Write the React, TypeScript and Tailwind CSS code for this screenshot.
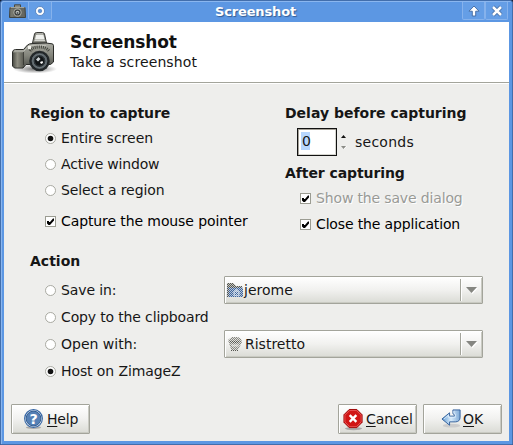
import React from "react";

function Camera() {
  return (
    <svg viewBox="0 0 48 44" className="h-[44px] w-[48px]">
      <defs>
        <linearGradient id="metal" x1="0" y1="0" x2="0" y2="1">
          <stop offset="0" stopColor="#a9aaa2" />
          <stop offset=".5" stopColor="#84857c" />
          <stop offset="1" stopColor="#4a4c47" />
        </linearGradient>
        <linearGradient id="grip" x1="0" y1="0" x2="1" y2="0">
          <stop offset="0" stopColor="#4e4f48" />
          <stop offset=".4" stopColor="#8f8e82" />
          <stop offset="1" stopColor="#55564f" />
        </linearGradient>
        <radialGradient id="shade">
          <stop offset="0" stopColor="#000" stopOpacity=".55" />
          <stop offset="1" stopColor="#000" stopOpacity="0" />
        </radialGradient>
      </defs>
      <ellipse cx="25" cy="38" rx="22" ry="4.500" fill="url(#shade)" />
      <path d="M22.500 12 24.500 3Q25 1.500 26.500 1.500h6q1.500 0 2 1.500L36.500 12z" fill="#8d8e86" stroke="#3a3b37" />
      <path d="M26 4h7.500l1 4.500H25z" fill="#f0f1ee" />
      <path d="M24.500 9.500h10.500M26.500 3h6.500" stroke="#e5e6e2" strokeWidth=".8" />
      <path d="M2.500 21Q3 18.500 5.500 18.500h8l4-4.500Q19 12.500 23 12.500l13-.5 6 .8q1.500.2 1.500 2V31l-3 2.500H16l-3 3.500H4.500L2.500 35z" fill="url(#metal)" stroke="#2b2c29" />
      <path d="M3 21.500h10l1 12-1.500 3H5L3 35z" fill="url(#grip)" />
      <path d="M4 20h10l5-5.500h17" fill="none" stroke="#c6c7bf" strokeWidth=".8" />
      <path d="M13.500 21v13" stroke="#33342f" strokeWidth=".8" />
      <path d="M20 20c2-3 5-4 9-4s8 1 10 4" fill="none" stroke="#44463f" strokeWidth="3" strokeDasharray="1 1" />
      <rect x="18" y="15" width="3" height="3" fill="#f3f3ec" />
      <circle cx="29.500" cy="30" r="10.300" fill="#252a2c" />
      <circle cx="29.500" cy="30" r="8.500" fill="#596267" stroke="#1c2022" />
      <circle cx="29.500" cy="30" r="6.500" fill="#2d3438" stroke="#7c868b" strokeWidth=".8" />
      <circle cx="29.500" cy="30" r="4.500" fill="#101416" />
      <path d="m26 28.500 2.500-2.500 2 2-2.500 2.500z" fill="#cfd5d8" />
      <path d="m30 31 2.500-1 .5 2-2 1z" fill="#fff" />
    </svg>
  );
}

function TitleCamera() {
  return (
    <svg viewBox="0 0 17 15" className="h-[15px] w-[17px]">
      <path d="M5.500 3V.8h6V3" fill="#8d8e84" stroke="#474943" />
      <path d="M1 3.500h15l.5 10H.5z" fill="#66675f" stroke="#41433d" />
      <path d="M1.500 3.500h14" stroke="#a3a49a" />
      <path d="M1.500 5h3v8h-3z" fill="#77786e" />
      <circle cx="8.500" cy="8.500" r="4.200" fill="#a6a79d" />
      <circle cx="8.500" cy="8.500" r="3.100" fill="#3c3f3e" />
      <circle cx="8.500" cy="8.500" r="1.800" fill="#c2c5bf" />
      <circle cx="8.500" cy="9" r="1" fill="#4c5358" />
    </svg>
  );
}

function Radio({ on = false, children, className = "" }: { on?: boolean; children: React.ReactNode; className?: string }) {
  return (
    <div className={`flex items-center pl-[15px] ${className}`}>
      <svg viewBox="0 0 11 11" className="mr-[5px] h-[11px] w-[11px] shrink-0">
        <circle cx="5.500" cy="5.500" r="5" fill="#fff" stroke="#a0a198" strokeWidth=".9" />
        {on && <circle cx="5.500" cy="5.500" r="2.800" fill="#111" />}
      </svg>
      {children}
    </div>
  );
}

function Check({ disabled = false, children, className = "" }: { disabled?: boolean; children: React.ReactNode; className?: string }) {
  return (
    <div className={`flex items-center pl-[15px] tracking-[-0.1px] ${className}`}>
      <svg viewBox="0 0 11 11" className="mr-[5px] h-[11px] w-[11px] shrink-0">
        <rect x=".5" y=".5" width="10" height="10" fill="#fff" stroke="#9b9c92" />
        <path d="M2 5h2v1l1 0 3-3.500h1v2L5 9H3.500L2 7.500z" fill="#000" />
      </svg>
      <span className={disabled ? "text-[#999a96] [text-shadow:1px_1px_0_#fff]" : "text-black"}>{children}</span>
    </div>
  );
}

function Combo({ icon, children }: { icon: React.ReactNode; children: React.ReactNode }) {
  return (
    <div className="flex h-[28px] w-[259px] items-center rounded-[1px] border border-[#a3a49b] bg-linear-to-b from-white via-[#f1f1ef] to-[#dadbd5] pl-[2px] shadow-[inset_1px_1px_0_#fff,inset_-1px_-1px_0_#c9cac2]">
      {icon}
      <span className="flex-1 pl-px">{children}</span>
      <span className="h-[22px] w-[2px] border-r border-l border-r-white border-l-[#a3a49b]" />
      <svg viewBox="0 0 20 12" className="h-[12px] w-[20px]">
        <path d="M5 4h11l-5.500 6z" fill="#fff" />
        <path d="M4 3h11L9.500 9z" fill="#858681" />
      </svg>
    </div>
  );
}

function Button({ icon, children, className }: { icon: React.ReactNode; children: React.ReactNode; className: string }) {
  return (
    <button className={`flex h-[30px] w-[79px] items-center rounded-[1px] border border-[#a3a49b] bg-linear-to-b from-white via-[#f1f1ef] to-[#dadbd5] whitespace-nowrap shadow-[inset_1px_1px_0_#fff,inset_-1px_-1px_0_#c9cac2] ${className}`}>
      {icon}
      <span>{children}</span>
    </button>
  );
}

function Key({ children }: { children: string }) {
  return <span className="underline decoration-1 underline-offset-[2px]">{children}</span>;
}

function TitleButton({ children, className = "" }: { children: React.ReactNode; className?: string }) {
  return (
    <span className={`flex h-[18px] items-center justify-center rounded-b-[2px] border border-t-0 border-[#86b2ec] bg-[#659ee6] ${className}`}>
      <svg viewBox="0 0 14 14" className="h-[14px] w-[14px]">{children}</svg>
    </span>
  );
}

export default function App() {
  return (
    <div className="h-[445px] w-[513px] overflow-hidden bg-[#17213a] font-['DejaVu_Sans',sans-serif] text-[14px] leading-[20px] text-[#161616]">
      <div className="flex h-full w-full flex-col rounded-t-[3px] border border-[#426eac] bg-[#5c97e3] shadow-[inset_1px_1px_0_#8ab6ef]">
        <div className="flex h-[21px] shrink-0 pt-px">
          <div className="w-[27px] pt-[2px] pl-[8px]"><TitleCamera /></div>
          <TitleButton className="w-[24px]">
            <circle cx="7" cy="7" r="4.500" fill="#fff" stroke="#3d6cac" strokeWidth=".7" />
            <circle cx="7" cy="7" r="1.800" fill="#5c93dc" stroke="#386db1" strokeWidth=".6" />
          </TitleButton>
          <div className="flex-1 pt-px pl-[163px] text-[13px] leading-[17px] font-bold tracking-[-0.15px] text-white [text-shadow:1px_1px_1px_#355d94]">Screenshot</div>
          <TitleButton className="w-[23px]">
            <path d="M7 2 12 7.200H8.700V12H5.300V7.200H2z" fill="#fff" stroke="#4068a0" strokeWidth=".9" />
          </TitleButton>
          <TitleButton className="mr-[4px] w-[23px]">
            <path d="m3 3 8 8m0-8-8 8" stroke="#4068a0" strokeWidth="4" />
            <path d="m3 3 8 8m0-8-8 8" stroke="#fff" strokeWidth="2.500" />
          </TitleButton>
        </div>
        <main className="mx-[3px] mb-[3px] flex min-h-0 flex-1 flex-col bg-[#eeeeec]">
          <header className="flex h-[62px] shrink-0 border-b border-white bg-white shadow-[inset_0_-1px_0_#a3a49b]">
            <div className="w-[66px] pt-[9px] pl-[6px]"><Camera /></div>
            <div className="pt-[9px]">
              <h1 className="text-[17px] leading-[22px] font-bold tracking-[-0.1px] text-[#111]">Screenshot</h1>
              <p className="leading-[18px] tracking-[0.1px]">Take a screenshot</p>
            </div>
          </header>
          <div className="flex h-[148px] shrink-0 pt-[19px] pl-[26px]">
            <section className="w-[255px]">
              <h2 className="font-bold tracking-[-0.08px]">Region to capture</h2>
              <Radio on className="mt-[5px]">Entire screen</Radio>
              <Radio className="mt-[6px] tracking-[-0.2px]">Active window</Radio>
              <Radio className="mt-[6px] tracking-[-0.1px]">Select a region</Radio>
              <Check className="mt-[11px]">Capture the mouse pointer</Check>
            </section>
            <section>
              <h2 className="font-bold">Delay before capturing</h2>
              <div className="mt-[5px] flex h-[28px] items-center pl-[12px]">
                <div className="h-[28px] w-[40px] border border-[#111] bg-white p-[3px] shadow-[inset_1px_1px_0_#a5a198,inset_-1px_-1px_0_#d6d6d0]">
                  <span className="block h-[18px] w-[9px] bg-[#b7d6fd] pl-px leading-[18px]">0</span>
                </div>
                <svg viewBox="0 0 8 18" className="ml-[3px] h-[18px] w-[8px]">
                  <path d="M1 5h5L3.500 2z" fill="#111" />
                  <path d="M1 13h5l-2.500 3z" fill="#8b8c87" />
                  <path d="m4 16 3-3" stroke="#fff" strokeWidth=".7" />
                </svg>
                <span className="ml-[7px] tracking-[0.25px]">seconds</span>
              </div>
              <h2 className="mt-[7px] font-bold tracking-[-0.08px]">After capturing</h2>
              <Check disabled className="mt-[5px] tracking-[-0.15px]">Show the save dialog</Check>
              <Check className="mt-[6px] tracking-[-0.15px]">Close the application</Check>
            </section>
          </div>
          <section className="flex-1 pt-[19px] pl-[26px]">
            <h2 className="font-bold">Action</h2>
            <div className="mt-[5px] flex h-[28px] items-center">
              <Radio className="w-[194px] tracking-[-0.12px]">Save in:</Radio>
              <Combo icon={
                <svg viewBox="0 0 16 16" className="h-[16px] w-[16px]">
                  <defs>
                    <pattern id="folderDots" width="2" height="2" patternUnits="userSpaceOnUse">
                      <path fill="#40669b" d="M0 0h1v1H0zM1 1h1v1H1z" />
                    </pattern>
                    <pattern id="greyDots" width="2" height="2" patternUnits="userSpaceOnUse">
                      <path fill="#555650" d="M0 0h1v1H0zM1 1h1v1H1z" />
                    </pattern>
                  </defs>
                  <path d="M0 1h6l3 3h6v3H0z" fill="#c6c7c1" />
                  <path d="M0 5h16v10H0z" fill="#b7c5da" />
                  <path d="M0 1h6l3 3h6v2H2v9H0z" fill="url(#greyDots)" />
                  <path d="M2 6h14v9H2z" fill="url(#folderDots)" />
                  <path d="m5.500 10.500 4-4 4 4h-1V14h-6v-3.500z" fill="#e6eef8" fillOpacity=".6" />
                  <path d="M8 10h3v3H8z" fill="url(#folderDots)" />
                </svg>
              }>jerome</Combo>
            </div>
            <Radio className="h-[26px] tracking-[-0.15px]">Copy to the clipboard</Radio>
            <div className="flex h-[28px] items-center">
              <Radio className="w-[194px]">Open with:</Radio>
              <Combo icon={
                <svg viewBox="0 0 16 16" className="h-[16px] w-[16px]">
                  <path d="M5 1h6l3 2 1 3-2 4-2 3v2H4v-2L2 7 1 4z" fill="#e0e0dc" />
                  <path d="M5 1h6l3 2 1 3-2 4-2 3v2H4v-2L2 7 1 4z" fill="url(#greyDots)" fillOpacity=".65" />
                  <path d="M2 5h12l-3 2H5zM4 14h7v1H4z" fill="url(#greyDots)" />
                  <path d="M4 8.500h8l-1 2H5z" fill="#f3f3f0" fillOpacity=".6" />
                </svg>
              }><span className="pl-px">Ristretto</span></Combo>
            </div>
            <Radio on className="mt-[3px] tracking-[-0.1px]">Host on ZimageZ</Radio>
          </section>
          <footer className="flex h-[37px] shrink-0 pl-[7px]">
            <Button className="pl-[11px] tracking-[-0.2px]" icon={
              <svg viewBox="0 0 22 22" className="mr-[3px] h-[22px] w-[21px] shrink-0">
                <ellipse cx="11" cy="20" rx="8" ry="1.500" fill="#aaa" />
                <circle cx="11" cy="10.500" r="9.300" fill="#fff" stroke="#3465a4" strokeWidth="1.200" />
                <circle cx="11" cy="10.500" r="7.800" fill="#5580b5" stroke="#2c578c" />
                <text x="11" y="16" textAnchor="middle" fill="#fff" className="font-['DejaVu_Sans',sans-serif] text-[15px] font-bold">?</text>
              </svg>
            }><Key>H</Key>elp</Button>
            <Button className="ml-auto pl-[4px] tracking-[-0.1px]" icon={
              <svg viewBox="0 0 22 23" className="mr-[2px] h-[23px] w-[21px] shrink-0">
                <ellipse cx="11" cy="21" rx="9" ry="1.700" fill="#aaa" />
                <path d="M6.500 1h8L20 6.500v8L14.500 20h-8L1 14.500v-8z" fill="#d11515" stroke="#980000" />
                <path d="M7 2h7l5 5v7l-5 5H7l-5-5V7z" fill="none" stroke="#ee6262" strokeWidth=".8" />
                <path d="m7 7 7 7m0-7-7 7" stroke="#fff" strokeWidth="2.500" />
              </svg>
            }><Key>C</Key>ancel</Button>
            <Button className="mr-[7px] ml-[6px] pl-[17px]" icon={
              <svg viewBox="0 0 22 22" className="mr-px h-[22px] w-[21px] shrink-0">
                <defs>
                  <linearGradient id="returnArrow">
                    <stop offset="0" stopColor="#629bd3" />
                    <stop offset=".5" stopColor="#d8ebfa" />
                    <stop offset="1" stopColor="#7ca8d6" />
                  </linearGradient>
                </defs>
                <ellipse cx="11" cy="18" rx="9" ry="2" fill="#ccc" />
                <path d="M1 11 9 4.500V8h5V6.500l-1.500-1V1.500H20V9q0 5-5 5H9v3.500z" fill="url(#returnArrow)" stroke="#315f9b" strokeLinejoin="round" />
                <path d="m3 11 5-4v2.200h7V6l-1.500-1V2.500" fill="none" stroke="#e4f2ff" strokeWidth=".8" />
              </svg>
            }><Key>O</Key>K</Button>
          </footer>
        </main>
      </div>
    </div>
  );
}
